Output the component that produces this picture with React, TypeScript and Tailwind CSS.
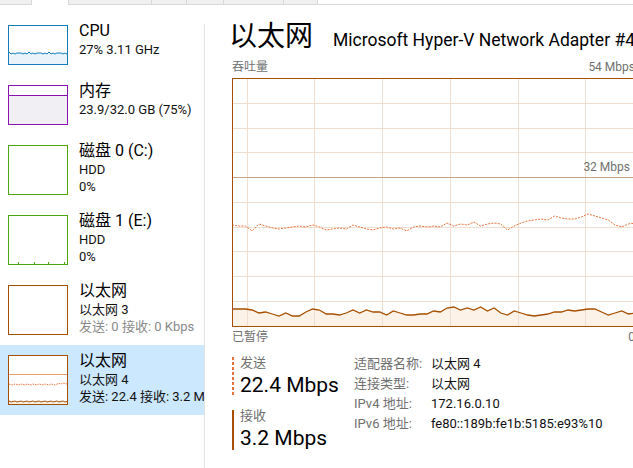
import React from 'react';

// send / receive samples, absolute page y values (graph interior starts at y=79)
const sendY = [225, 226, 226, 231, 224, 226, 228, 229, 228, 227, 226, 227, 225, 227, 230, 229, 228, 229, 225, 227, 229, 230, 228, 227, 229, 228, 231, 227, 226, 227, 226, 227, 223, 226, 224, 225, 222, 226, 224, 223, 224, 230, 226, 223, 221, 220, 219, 220, 216, 218, 219, 219, 217, 214, 216, 218, 220, 225, 227, 224, 223];
const recvY = [309, 309, 309, 310, 313, 312, 314, 316, 313, 316, 316, 312, 309, 310, 314, 314, 315, 313, 310, 313, 310, 312, 312, 315, 311, 313, 315, 315, 314, 314, 311, 312, 308, 307, 310, 308, 310, 307, 311, 308, 313, 315, 311, 313, 315, 316, 315, 314, 312, 312, 310, 311, 310, 309, 309, 312, 315, 313, 311, 314, 313];

const GW = 401;
const GH = 247;

function pts(ys: number[]) {
    return ys.map((y, i) => `${(i * 6.72 - 1).toFixed(1)},${y - 79}`).join(' ');
}

function Graph() {
    const recv = pts(recvY);
    return (
        <svg width={GW} height={GH} className="block">
            <polygon points={`-1,${GH} ${recv} ${GW + 2},${GH}`} fill="#fcf2e8" />
            {[1, 2, 3, 5, 6, 7, 8, 9].map((k) => (
                <rect key={k} x={0} y={Math.round(k * 24.75) - 1} width={GW} height={1} fill="#f0dfd1" />
            ))}
            {[0, 1, 2, 3, 4, 5].map((k) => (
                <rect key={k} x={Math.round(13.7 + 67.7 * k)} y={0} width={1} height={GH} fill="#f0dfd1" />
            ))}
            <rect x={0} y={98} width={GW} height={1} fill="#c7a486" />
            <polyline points={pts(sendY)} fill="none" stroke="#e8743b" strokeWidth={1} strokeDasharray="2 1.2" />
            <polyline points={recv} fill="none" stroke="#a74f01" strokeWidth={1.3} />
        </svg>
    );
}

function Thumb({ color, h, children }: { color: string; h: string; children?: React.ReactNode }) {
    return (
        <div className={`w-[60px] shrink-0 border bg-white overflow-hidden ${color} ${h}`}>
            {children}
        </div>
    );
}

function SideItem({ thumb, name, lines, selected, dim }: { thumb: React.ReactNode; name: string; lines: string[]; selected?: boolean; dim?: boolean }) {
    return (
        <div className={`flex gap-[11px] pl-[8px] py-[10px] ${selected ? 'bg-[#cce8ff]' : ''}`}>
            {thumb}
            <div className="-mt-[4px] h-0 whitespace-nowrap">
                <div className="h-[20px] text-[16px] leading-[20px] text-black">{name}</div>
                {lines.map((l, i) => (
                    <div
                        key={i}
                        className={`h-[17px] text-[13px] leading-[17px] ${dim && i === lines.length - 1 ? 'text-[#8a8a8a]' : 'text-[#111]'}`}
                    >
                        {l}
                    </div>
                ))}
            </div>
        </div>
    );
}

const cpuWave = Array.from({ length: 30 }, (_, i) => `${i * 2},${27 + (i % 2 === 0 ? 0 : 1) + (i % 5 === 0 ? -1 : 0)}`).join(' ');
const ethDash = Array.from({ length: 30 }, (_, i) => `${i * 2},${28 + ((i * 7) % 3) * 0.5 - (i > 24 ? 1 : 0)}`).join(' ');
const ethSolid = Array.from({ length: 30 }, (_, i) => `${i * 2},${45 + ((i * 5) % 3) * 0.5}`).join(' ');

export default function App() {
    return (
        <div className="w-[633px] h-[468px] overflow-hidden bg-white flex flex-col font-[Roboto,'Noto_Sans_CJK_SC',sans-serif]">
            {/* tab strip remnant */}
            <div className="flex h-[5px] shrink-0">
                <div className="w-[31px] bg-[#f0f0f0] border-b border-[#d9d9d9]" />
                <div className="w-[38px] bg-white border-x border-[#d9d9d9]" />
                <div className="w-[83px] bg-[#f0f0f0] border-b border-r border-[#d9d9d9]" />
                <div className="w-[35px] bg-[#f0f0f0] border-b border-r border-[#d9d9d9]" />
                <div className="w-[37px] bg-[#f0f0f0] border-b border-r border-[#d9d9d9]" />
                <div className="w-[60px] bg-[#f0f0f0] border-b border-r border-[#d9d9d9]" />
                <div className="w-[34px] bg-[#f0f0f0] border-b border-r border-[#d9d9d9]" />
                <div className="flex-1 border-b border-[#d9d9d9]" />
            </div>

            <div className="flex flex-1 min-h-0">
                {/* left list */}
                <div className="w-[204px] shrink-0 pt-[10px] overflow-hidden">
                    <SideItem
                        name="CPU"
                        lines={['27% 3.11 GHz']}
                        thumb={
                            <Thumb color="border-[#117dbb]" h="h-[40px]">
                                <svg width="58" height="38" className="block">
                                    <polygon points={`0,38 ${cpuWave} 60,38`} fill="#eaf3f9" />
                                    <polyline points={cpuWave} fill="none" stroke="#117dbb" strokeWidth={1} />
                                </svg>
                            </Thumb>
                        }
                    />
                    <SideItem
                        name="内存"
                        lines={['23.9/32.0 GB (75%)']}
                        thumb={
                            <Thumb color="border-[#8b12ae]" h="h-[40px]">
                                <svg width="58" height="38" className="block">
                                    <rect x={0} y={9} width={58} height={29} fill="#f1eff3" />
                                    <rect x={0} y={9} width={58} height={1} fill="#8b12ae" />
                                </svg>
                            </Thumb>
                        }
                    />
                    <SideItem name="磁盘 0 (C:)" lines={['HDD', '0%']} thumb={<Thumb color="border-[#4da60c]" h="h-[50px]" />} />
                    <SideItem
                        name="磁盘 1 (E:)"
                        lines={['HDD', '0%']}
                        thumb={
                            <Thumb color="border-[#4da60c]" h="h-[50px]">
                                <svg width="58" height="48" className="block">
                                    {[9, 25, 39, 55].map((x) => (
                                        <rect key={x} x={x} y={46} width={1} height={2} fill="#4da60c" />
                                    ))}
                                </svg>
                            </Thumb>
                        }
                    />
                    <SideItem
                        name="以太网"
                        lines={['以太网 3', '发送: 0 接收: 0 Kbps']}
                        dim
                        thumb={<Thumb color="border-[#a74f01]" h="h-[50px]" />}
                    />
                    <SideItem
                        name="以太网"
                        lines={['以太网 4', '发送: 22.4 接收: 3.2 Mbps']}
                        selected
                        thumb={
                            <Thumb color="border-[#a74f01]" h="h-[50px]">
                                <svg width="58" height="48" className="block">
                                    <rect x={0} y={18} width={58} height={1} fill="#e9a06c" />
                                    <polyline points={ethDash} fill="none" stroke="#e8743b" strokeWidth={1} strokeDasharray="1.5 1" />
                                    <polygon points={`0,48 ${ethSolid} 60,48`} fill="#fcf2e8" />
                                    <polyline points={ethSolid} fill="none" stroke="#a74f01" strokeWidth={1} />
                                </svg>
                            </Thumb>
                        }
                    />
                </div>

                <div className="w-px shrink-0 mt-[19px] bg-[#e3e3e3]" />

                {/* detail pane */}
                <div className="w-[430px] shrink-0 pl-[27px] pt-[14px]">
                    <div className="flex items-baseline gap-[20px] h-[36px] whitespace-nowrap leading-[36px]">
                        <span className="text-[28px] text-black -ml-[3px]">以太网</span>
                        <span className="text-[17.5px] text-black">Microsoft Hyper-V Network Adapter #4</span>
                    </div>

                    <div className="mt-[4px] h-[16px] flex justify-between text-[12px] leading-[16px] text-[#707070]">
                        <span>吞吐量</span>
                        <span>54 Mbps</span>
                    </div>

                    <div className="relative mt-[3px] h-[249px] border border-[#a74f01]">
                        <Graph />
                        <span className="absolute top-[80px] right-[4px] text-[12px] leading-[16px] text-[#707070]">32 Mbps</span>
                    </div>

                    <div className="mt-[2px] h-[16px] flex justify-between text-[12px] leading-[16px] text-[#707070]">
                        <span>已暂停</span>
                        <span>0</span>
                    </div>

                    <div className="mt-[8px] flex">
                        <div className="w-[122px] shrink-0 pt-[4px] flex flex-col gap-[13px]">
                            <div className="flex gap-[6px] h-[40px]">
                                <div className="w-[2px] shrink-0 bg-[repeating-linear-gradient(to_bottom,#e8743b_0px,#e8743b_3px,transparent_3px,transparent_5px)]" />
                                <div className="-mt-[2px] whitespace-nowrap">
                                    <div className="h-[17px] text-[13px] leading-[16px] text-[#707070]">发送</div>
                                    <div className="h-[26px] text-[21px] leading-[26px] text-black">22.4 Mbps</div>
                                </div>
                            </div>
                            <div className="flex gap-[6px] h-[40px]">
                                <div className="w-[2px] shrink-0 bg-[#a74f01]" />
                                <div className="-mt-[2px] whitespace-nowrap">
                                    <div className="h-[17px] text-[13px] leading-[16px] text-[#707070]">接收</div>
                                    <div className="h-[26px] text-[21px] leading-[26px] text-black">3.2 Mbps</div>
                                </div>
                            </div>
                        </div>

                        <div className="grid grid-cols-[77px_auto] auto-rows-[20px] text-[13px] leading-[20px] whitespace-nowrap pt-[1px]">
                            <span className="text-[#707070]">适配器名称:</span>
                            <span className="text-[#111]">以太网 4</span>
                            <span className="text-[#707070]">连接类型:</span>
                            <span className="text-[#111]">以太网</span>
                            <span className="text-[#707070]">IPv4 地址:</span>
                            <span className="text-[#111]">172.16.0.10</span>
                            <span className="text-[#707070]">IPv6 地址:</span>
                            <span className="text-[#111]">fe80::189b:fe1b:5185:e93%10</span>
                        </div>
                    </div>
                </div>
            </div>
        </div>
    );
}
